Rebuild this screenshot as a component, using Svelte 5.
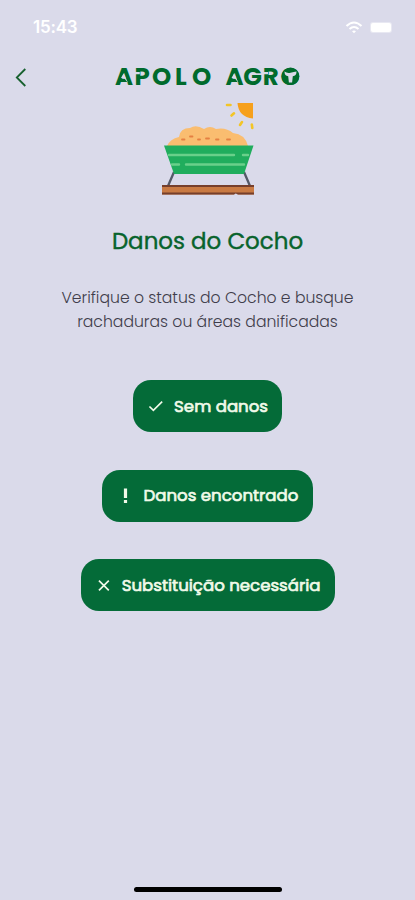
<script lang="ts">
  type Icon = 'check' | 'alert' | 'close';

  interface Option {
    id: string;
    label: string;
    icon: Icon;
  }

  const options: Option[] = [
    { id: 'ok', label: 'Sem danos', icon: 'check' },
    { id: 'damaged', label: 'Danos encontrado', icon: 'alert' },
    { id: 'replace', label: 'Substituição necessária', icon: 'close' }
  ];

  let selected = $state('');
</script>

<div class="screen">
  <div class="status-bar">
    <span class="time">15:43</span>
    <div class="status-icons">
      <svg width="18" height="13" viewBox="0 0 18 13" fill="none" stroke="#fff" stroke-width="2.1">
        <path d="M1.500 5Q9-2 16.500 5" />
        <path d="M4.500 8Q9 4 13.500 8" />
        <path d="M7 10.200Q9 8.600 11 10.200L9 12.200Z" fill="#fff" stroke="none" />
      </svg>
      <span class="battery"></span>
    </div>
  </div>

  <header class="header">
    <button type="button" class="back" aria-label="Voltar">
      <svg width="12" height="19" viewBox="0 0 12 19" fill="none" stroke="#17602f" stroke-width="1.8">
        <path d="M10.300 1L1.800 9.500L10.300 18" />
      </svg>
    </button>
    <svg class="logo" width="186" height="36" viewBox="0 0 186 36">
      <text y="26" x="0 19.500 37 60 77 110.500 128.300 147.800 165.500">APOLOAGRO</text>
      <!-- stencil cuts -->
      <g fill="#dadaea">
        <path d="M6 19L8.500 14.500L12 21.500L13 24L9.500 19.500Z" />
        <path d="M116.500 19L119 14.500L122.500 21.500L123.500 24L120 19.500Z" />
        <path d="M19.500 13H24.800V15.200H19.500ZM148 13H153V15.200H148Z" />
      </g>
      <!-- bull head -->
      <circle cx="175.500" cy="17.300" r="8.800" fill="#006b2d" />
      <path d="M169.500 12.500q2.500 2 6 1.200t6-1.200q0 4.500-3.700 4.700l-.7 6.300h-3.200l-.7-6.300q-3.700-.2-3.700-4.700z" fill="#dadaea" />
    </svg>
  </header>

  <main class="content">
    <svg class="trough" width="94" height="94" viewBox="0 0 94 94">
      <path d="M76.500 2H92V17.500Q77.500 16 76.500 2Z" fill="#f6a01c" />
      <g stroke="#f3c526" stroke-width="2.600" stroke-linecap="round">
        <path d="M66 4h3.500M70.500 14.500l2.500-2.200M79 24l2-3M90.800 23.500l.5 3.500" />
      </g>
      <path d="M6 45Q9 38 18 36Q19 27 29 27Q35 23 43 28Q49 24 55 28Q65 26 72 32Q84 33 87 45Z" fill="#fabd70" />
      <g stroke="#e58042" stroke-width="1.800" stroke-linecap="round">
        <path d="M21 38.500h2.500M29 35.500h2.500M37 38.500h2M45 37.500h3M55 38.500h2.500M66 38.500h3" />
      </g>
      <path d="M13 71L7 85M83 71L89 85" stroke="#555967" stroke-width="2.300" />
      <path d="M3 44.500H92.500L83 73H13Z" fill="#20ad5d" />
      <g stroke="#69d08a" stroke-width="2.400" stroke-linecap="round">
        <path d="M8 54H73M82 54H87M11 63.500H18M25 63.500H83" />
      </g>
      <path d="M1 84H93V93.500H1Z" fill="#c97a43" />
      <path d="M1 85H93M1 92.500H93" stroke="#763f2c" stroke-width="2" />
      <path d="M73 94q1.500-3 4 0z" fill="#dadaea" />
    </svg>

    <h1 class="title">Danos do Cocho</h1>
    <p class="description">Verifique o status do Cocho e busque<br />rachaduras ou áreas danificadas</p>

    <div class="options">
      {#each options as option (option.id)}
        <button
          type="button"
          class="option {option.id}"
          aria-pressed={selected === option.id}
          onclick={() => (selected = option.id)}
        >
          <svg width="18" height="18" viewBox="0 0 18 18" fill="none" stroke="#f1fae9" stroke-width="1.700">
            {#if option.icon === 'check'}
              <path d="M2.500 9.500L6.500 13.500L15.500 4.500" />
            {:else if option.icon === 'alert'}
              <path d="M9.500 1.500V11M9.500 13V16" stroke-width="3.200" />
            {:else}
              <path d="M4 4.500L14 14.500M14 4.500L4 14.500" />
            {/if}
          </svg>
          <span class="label">{option.label}</span>
        </button>
      {/each}
    </div>
  </main>

  <div class="home-indicator"></div>
</div>

<style>
  :global(body) {
    margin: 0;
    background: #dadaea;
  }

  .screen {
    height: 900px;
    display: flex;
    flex-direction: column;
    background: #dadaea;
    font-family: Poppins, Inter, sans-serif;
    overflow: hidden;
  }

  .status-bar {
    display: flex;
    align-items: center;
    justify-content: space-between;
    height: 54px;
    padding: 0 21px 0 33px;
    box-sizing: border-box;
  }

  .time {
    color: #fff;
    font-family: Inter, sans-serif;
    font-size: 17px;
    font-weight: 600;
    letter-spacing: -0.2px;
  }

  .status-icons {
    display: flex;
    align-items: center;
    gap: 8px;
  }

  .battery {
    width: 20px;
    height: 9px;
    margin-right: 3px;
    border-radius: 2px;
    background: #fff;
    box-shadow: 0 0 0 1px #e8e8f2;
  }

  .header {
    display: grid;
    grid-template-columns: 100px 1fr 100px;
    align-items: center;
    justify-items: center;
    height: 46px;
  }

  .back {
    justify-self: start;
    display: flex;
    margin-left: 15px;
    padding: 0;
    background: none;
    border: none;
    cursor: pointer;
  }

  .logo {
    margin-left: 1px;
  }

  .logo text {
    fill: #006b2d;
    font-family: Poppins, Inter, sans-serif;
    font-size: 24.5px;
    font-weight: 700;
  }

  .content {
    flex: 1;
    display: flex;
    flex-direction: column;
    align-items: center;
  }

  .trough {
    margin-top: 1px;
  }

  .title {
    margin: 28px 0 0;
    color: #08632c;
    font-size: 22.95px;
    font-weight: 400;
    line-height: 36px;
    -webkit-text-stroke: 0.4px #08632c;
  }

  .description {
    margin: 27px 0 0;
    color: #3f3d4b;
    font-size: 15.65px;
    font-weight: 300;
    line-height: 24px;
    text-align: center;
    white-space: nowrap;
  }

  .options {
    display: flex;
    flex-direction: column;
    align-items: center;
    gap: 37.5px;
    margin-top: 46px;
  }

  .option {
    display: flex;
    align-items: center;
    gap: 9.5px;
    height: 52px;
    padding: 0 14px;
    border: none;
    border-radius: 18px;
    background: #046b38;
    color: #f1fae9;
    font: inherit;
    font-size: 16.6px;
    white-space: nowrap;
    cursor: pointer;
    -webkit-text-stroke: 0.7px #f1fae9;
  }

  .ok {
    width: 149px;
  }

  .damaged {
    width: 211px;
  }

  .replace {
    width: 254px;
  }

  .home-indicator {
    align-self: center;
    width: 148px;
    height: 5px;
    margin-bottom: 8px;
    border-radius: 3px;
    background: #000;
  }
</style>
